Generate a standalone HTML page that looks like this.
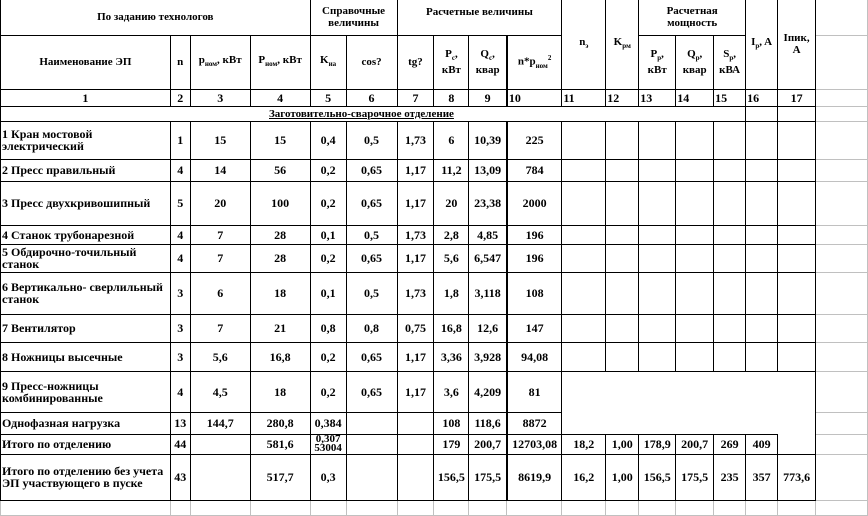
<!DOCTYPE html>
<html><head><meta charset="utf-8"><style>
html,body{margin:0;padding:0;background:#fff;width:868px;height:515px;overflow:hidden}
table{border-collapse:collapse;table-layout:fixed;position:absolute;left:0;top:0;font-family:"Liberation Serif",serif;font-weight:bold;font-size:12px;color:#000}
td{border:1px solid #000;padding:0 1px;text-align:center;vertical-align:middle;overflow:hidden;line-height:12px;white-space:nowrap}
td.l{text-align:left;white-space:normal}
td.g{border:1px solid #c0c0c0;border-left-color:#000}
.tk{border-right:2px solid #000}
.h{font-size:11px}
sub{font-size:7px}
sup{font-size:7px}
u{text-decoration:underline}
</style></head><body>
<table>
<colgroup>
<col style="width:170px"><col style="width:20px"><col style="width:60px"><col style="width:60px"><col style="width:36px"><col style="width:51px"><col style="width:37px"><col style="width:35px"><col style="width:38px"><col style="width:55px"><col style="width:44px"><col style="width:33px"><col style="width:37px"><col style="width:38px"><col style="width:32px"><col style="width:32px"><col style="width:38px"><col style="width:52px">
</colgroup>
<tr style="height:35px" class="h"><td colspan="4" style="border-top:none">По заданию технологов</td><td colspan="2" style="border-top:none">Справочные<br>величины</td><td colspan="4" style="border-top:none;vertical-align:top;padding-top:6px">Расчетные величины</td><td rowspan="2" style="border-top:none">n<sub>э</sub></td><td rowspan="2" style="border-top:none">K<sub>pм</sub></td><td colspan="3" style="border-top:none">Расчетная<br>мощность</td><td rowspan="2" style="border-top:none">I<sub>p</sub>, A</td><td rowspan="2" style="border-top:none">Iпик,<br>A</td><td class="g" style="border-top:none"></td></tr>
<tr style="height:54px" class="h"><td>Наименование ЭП</td><td>n</td><td>p<sub>ном</sub>, кВт</td><td>P<sub>ном</sub>, кВт</td><td>K<sub>иа</sub></td><td>cos?</td><td>tg?</td><td>P<sub>с</sub>,<br>кВт</td><td class="tk">Q<sub>с</sub>,<br>квар</td><td>n*p<sub>ном</sub><sup>2</sup></td><td>P<sub>р</sub>,<br>кВт</td><td>Q<sub>р</sub>,<br>квар</td><td>S<sub>р</sub>,<br>кВА</td><td class="g"></td></tr>
<tr style="height:17px"><td>1</td><td>2</td><td>3</td><td>4</td><td>5</td><td>6</td><td>7</td><td>8</td><td class="tk">9</td><td class="l">10</td><td class="l">11</td><td class="l">12</td><td class="l">13</td><td class="l">14</td><td class="l">15</td><td class="l">16</td><td>17</td><td class="g"></td></tr>
<tr style="height:15px" class="h"><td colspan="15" style="padding-left:268px;text-align:left"><u>Заготовительно-сварочное отделение</u></td><td></td><td></td><td class="g"></td></tr>
<tr style="height:38px"><td class="l">1 Кран мостовой электрический</td><td>1</td><td>15</td><td>15</td><td>0,4</td><td>0,5</td><td>1,73</td><td>6</td><td class="tk">10,39</td><td>225</td><td></td><td></td><td></td><td></td><td></td><td></td><td></td><td class="g"></td></tr>
<tr style="height:22px"><td class="l">2 Пресс правильный</td><td>4</td><td>14</td><td>56</td><td>0,2</td><td>0,65</td><td>1,17</td><td>11,2</td><td class="tk">13,09</td><td>784</td><td></td><td></td><td></td><td></td><td></td><td></td><td></td><td class="g"></td></tr>
<tr style="height:44px"><td class="l">3 Пресс двухкривошипный</td><td>5</td><td>20</td><td>100</td><td>0,2</td><td>0,65</td><td>1,17</td><td>20</td><td class="tk">23,38</td><td>2000</td><td></td><td></td><td></td><td></td><td></td><td></td><td></td><td class="g"></td></tr>
<tr style="height:19px"><td class="l">4 Станок трубонарезной</td><td>4</td><td>7</td><td>28</td><td>0,1</td><td>0,5</td><td>1,73</td><td>2,8</td><td class="tk">4,85</td><td>196</td><td></td><td></td><td></td><td></td><td></td><td></td><td></td><td class="g"></td></tr>
<tr style="height:28px"><td class="l">5 Обдирочно-точильный станок</td><td>4</td><td>7</td><td>28</td><td>0,2</td><td>0,65</td><td>1,17</td><td>5,6</td><td class="tk">6,547</td><td>196</td><td></td><td></td><td></td><td></td><td></td><td></td><td></td><td class="g"></td></tr>
<tr style="height:42px"><td class="l">6 Вертикально- сверлильный станок</td><td>3</td><td>6</td><td>18</td><td>0,1</td><td>0,5</td><td>1,73</td><td>1,8</td><td class="tk">3,118</td><td>108</td><td></td><td></td><td></td><td></td><td></td><td></td><td></td><td class="g"></td></tr>
<tr style="height:28px"><td class="l">7 Вентилятор</td><td>3</td><td>7</td><td>21</td><td>0,8</td><td>0,8</td><td>0,75</td><td>16,8</td><td class="tk">12,6</td><td>147</td><td></td><td></td><td></td><td></td><td></td><td></td><td></td><td class="g"></td></tr>
<tr style="height:29px"><td class="l">8 Ножницы высечные</td><td>3</td><td>5,6</td><td>16,8</td><td>0,2</td><td>0,65</td><td>1,17</td><td>3,36</td><td class="tk">3,928</td><td>94,08</td><td></td><td></td><td></td><td></td><td></td><td></td><td></td><td class="g"></td></tr>
<tr style="height:41px"><td class="l">9 Пресс-ножницы комбинированные</td><td>4</td><td>4,5</td><td>18</td><td>0,2</td><td>0,65</td><td>1,17</td><td>3,6</td><td class="tk">4,209</td><td>81</td><td style="border-right:none;border-bottom:none"></td><td style="border:none"></td><td style="border:none"></td><td style="border:none"></td><td style="border:none"></td><td style="border:none"></td><td style="border-left:none;border-bottom:none"></td><td class="g"></td></tr>
<tr style="height:22px"><td class="l">Однофазная нагрузка</td><td>13</td><td>144,7</td><td>280,8</td><td>0,384</td><td></td><td></td><td>108</td><td class="tk">118,6</td><td>8872</td><td style="border-left:none;border-right:none;border-top:none"></td><td style="border-left:none;border-right:none;border-top:none"></td><td style="border-left:none;border-right:none;border-top:none"></td><td style="border-left:none;border-right:none;border-top:none"></td><td style="border-left:none;border-right:none;border-top:none"></td><td style="border-left:none;border-right:none;border-top:none"></td><td style="border-left:none;border-bottom:none;border-top:none"></td><td class="g"></td></tr>
<tr style="height:20px"><td class="l">Итого по отделению</td><td>44</td><td></td><td>581,6</td><td style="vertical-align:top;line-height:9px;font-size:11px">0,307<br>53004</td><td></td><td></td><td>179</td><td class="tk">200,7</td><td>12703,08</td><td>18,2</td><td>1,00</td><td>178,9</td><td>200,7</td><td>269</td><td>409</td><td style="border-top:none"></td><td class="g"></td></tr>
<tr style="height:46px"><td class="l">Итого по отделению без учета ЭП участвующего в пуске</td><td>43</td><td></td><td>517,7</td><td>0,3</td><td></td><td></td><td>156,5</td><td class="tk">175,5</td><td>8619,9</td><td>16,2</td><td>1,00</td><td>156,5</td><td>175,5</td><td>235</td><td>357</td><td>773,6</td><td class="g"></td></tr>
<tr style="height:15px"><td class="g" style="border-left-color:#c0c0c0"></td><td class="g" style="border-left-color:#c0c0c0"></td><td class="g" style="border-left-color:#c0c0c0"></td><td class="g" style="border-left-color:#c0c0c0"></td><td class="g" style="border-left-color:#c0c0c0"></td><td class="g" style="border-left-color:#c0c0c0"></td><td class="g" style="border-left-color:#c0c0c0"></td><td class="g" style="border-left-color:#c0c0c0"></td><td class="g" style="border-left-color:#c0c0c0"></td><td class="g" style="border-left-color:#c0c0c0"></td><td class="g" style="border-left-color:#c0c0c0"></td><td class="g" style="border-left-color:#c0c0c0"></td><td class="g" style="border-left-color:#c0c0c0"></td><td class="g" style="border-left-color:#c0c0c0"></td><td class="g" style="border-left-color:#c0c0c0"></td><td class="g" style="border-left-color:#c0c0c0"></td><td class="g" style="border-left-color:#c0c0c0"></td><td class="g" style="border-left-color:#c0c0c0"></td></tr>
</table>
</body></html>
